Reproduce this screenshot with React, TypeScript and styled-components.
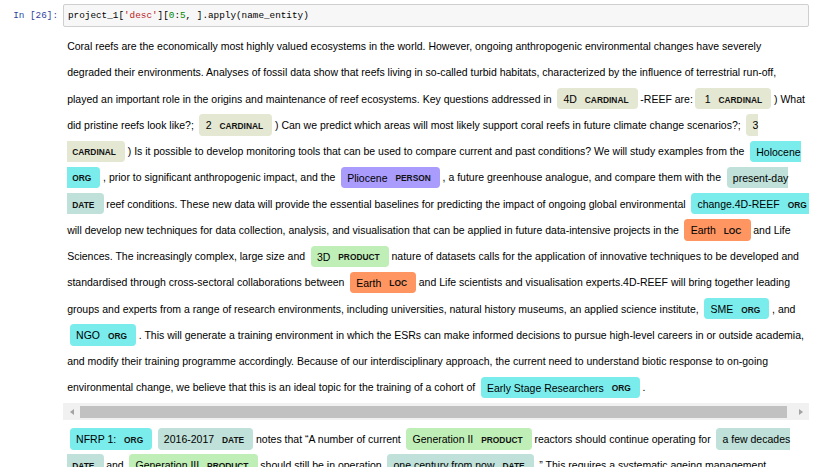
import React from 'react';
import styled, { createGlobalStyle } from 'styled-components';

// [text, label, breakBeforeLabel?]
type Entity = [string, string, boolean?];
type Segment = string | Entity;

const colors: Record<string, string> = {
    CARDINAL: '#e4e7d2',
    ORG: '#7aecec',
    PERSON: '#aa9cfc',
    DATE: '#bfe1d9',
    LOC: '#ff9561',
    PRODUCT: '#bfeeb7',
};

// "\n" marks where the notebook wrapped the line
const docOne: Segment[] = [
    'Coral reefs are the economically most highly valued ecosystems in the world. However, ongoing anthropogenic environmental changes have severely\ndegraded their environments. Analyses of fossil data show that reefs living in so-called turbid habitats, characterized by the influence of terrestrial run-off,\nplayed an important role in the origins and maintenance of reef ecosystems. Key questions addressed in ',
    ['4D', 'CARDINAL'],
    '-REEF are:',
    ['1', 'CARDINAL'],
    ') What\ndid pristine reefs look like?; ',
    ['2', 'CARDINAL'],
    ') Can we predict which areas will most likely support coral reefs in future climate change scenarios?; ',
    ['3', 'CARDINAL', true],
    ') Is it possible to develop monitoring tools that can be used to compare current and past conditions? We will study examples from the ',
    ['Holocene', 'ORG', true],
    ', prior to significant anthropogenic impact, and the ',
    ['Pliocene', 'PERSON'],
    ', a future greenhouse analogue, and compare them with the ',
    ['present-day', 'DATE', true],
    'reef conditions. These new data will provide the essential baselines for predicting the impact of ongoing global environmental ',
    ['change.4D-REEF', 'ORG'],
    '\nwill develop new techniques for data collection, analysis, and visualisation that can be applied in future data-intensive projects in the ',
    ['Earth', 'LOC'],
    'and Life\nSciences. The increasingly complex, large size and ',
    ['3D', 'PRODUCT'],
    'nature of datasets calls for the application of innovative techniques to be developed and\nstandardised through cross-sectoral collaborations between ',
    ['Earth', 'LOC'],
    'and Life scientists and visualisation experts.4D-REEF will bring together leading\ngroups and experts from a range of research environments, including universities, natural history museums, an applied science institute, ',
    ['SME', 'ORG'],
    ', and\n',
    ['NGO', 'ORG'],
    '. This will generate a training environment in which the ESRs can make informed decisions to pursue high-level careers in or outside academia,\nand modify their training programme accordingly. Because of our interdisciplinary approach, the current need to understand biotic response to on-going\nenvironmental change, we believe that this is an ideal topic for the training of a cohort of ',
    ['Early Stage Researchers', 'ORG'],
    '.',
];

const docTwo: Segment[] = [
    ['NFRP 1:', 'ORG'],
    ' ',
    ['2016-2017', 'DATE'],
    'notes that \u201cA number of current ',
    ['Generation II', 'PRODUCT'],
    'reactors should continue operating for ',
    ['a few decades', 'DATE', true],
    'and ',
    ['Generation III', 'PRODUCT'],
    'should still be in operation ',
    ['one century from now', 'DATE'],
    '.\u201d This requires a systematic ageing management\nprogramme to ensure the continued safe operation of the existing fleet.',
];

const GlobalStyle = createGlobalStyle`
    html, body {
        margin: 0;
        padding: 0;
        background: #fff;
        overflow: hidden;
    }
`;

const Page = styled.div`
    width: 818px;
    height: 467px;
    overflow: hidden;
    padding-top: 4px;
    box-sizing: border-box;
    font-family: "Liberation Sans", Arial, sans-serif;
    color: #000;
`;

const InputRow = styled.div`
    display: flex;
    align-items: stretch;
`;

const Prompt = styled.div`
    width: 63px;
    box-sizing: border-box;
    padding-right: 5px;
    text-align: right;
    font-family: "Liberation Mono", monospace;
    font-size: 9.33px;
    line-height: 23px;
    color: #303f9f;
    white-space: pre;
`;

const InputBox = styled.div`
    width: 746px;
    height: 23px;
    box-sizing: border-box;
    border: 1px solid #cfcfcf;
    border-radius: 2px;
    background: #f7f7f7;
    padding-left: 4px;
    font-family: "Liberation Mono", monospace;
    font-size: 9.33px;
    line-height: 21px;
    white-space: pre;
`;

const Str = styled.span`
    color: #ba2121;
`;

const Num = styled.span`
    color: #008800;
`;

const Output = styled.div`
    margin-left: 63px;
    width: 746px;
`;

const Entities = styled.div<{ $top: number }>`
    padding: ${p => p.$top}px 4.2px 0;
    font-size: 10.5px;
    line-height: 26.25px;
    white-space: nowrap;
    overflow: hidden;
    direction: ltr;
`;

const Mark = styled.mark<{ $bg: string }>`
    background: ${p => p.$bg};
    color: #000;
    padding: 4.7px 6.3px;
    margin: 0 2.6px;
    line-height: 1;
    border-radius: 3.7px;
`;

const Label = styled.span`
    font-size: 0.8em;
    font-weight: bold;
    line-height: 1;
    color: #111;
    text-transform: uppercase;
    vertical-align: middle;
    margin-left: 5px;
`;

const ScrollBar = styled.div`
    margin-top: 2.8px;
    height: 17px;
    background: #f1f1f1;
    display: flex;
    align-items: center;
`;

const Arrow = styled.div<{ $dir: 'left' | 'right' }>`
    width: 17px;
    height: 17px;
    display: flex;
    align-items: center;
    justify-content: center;
    &::before {
        content: '';
        width: 0;
        height: 0;
        border-top: 3.5px solid transparent;
        border-bottom: 3.5px solid transparent;
        ${p => p.$dir === 'left'
            ? 'border-right: 4px solid #a3a3a3;'
            : 'border-left: 4px solid #a3a3a3;'}
    }
`;

const Thumb = styled.div`
    flex: 1;
    height: 12px;
    background: #c1c1c1;
    margin-right: 5px;
`;

const Lines = ({ text }: { text: string }) => (
    <>
        {text.split('\n').map((part, i) => (
            <React.Fragment key={i}>
                {i > 0 && <br />}
                {part}
            </React.Fragment>
        ))}
    </>
);

const Doc = ({ segments, top }: { segments: Segment[]; top: number }) => (
    <Entities $top={top}>
        {segments.map((s, i) =>
            typeof s === 'string' ? (
                <Lines key={i} text={s} />
            ) : (
                <Mark key={i} $bg={colors[s[1]]}>
                    {' '}{s[0]}{' '}{s[2] && <br />}<Label>{s[1]}</Label>{' '}
                </Mark>
            )
        )}
    </Entities>
);

const App = () => (
    <Page>
        <GlobalStyle />
        <InputRow>
            <Prompt>In [26]:</Prompt>
            <InputBox>
                project_1[<Str>'desc'</Str>][<Num>0</Num>:<Num>5</Num>, ].apply(name_entity)
            </InputBox>
        </InputRow>
        <Output>
            <Doc segments={docOne} top={6.2} />
            <ScrollBar>
                <Arrow $dir="left" />
                <Thumb />
                <Arrow $dir="right" />
            </ScrollBar>
            <Doc segments={docTwo} top={5.4} />
        </Output>
    </Page>
);

export default App;
